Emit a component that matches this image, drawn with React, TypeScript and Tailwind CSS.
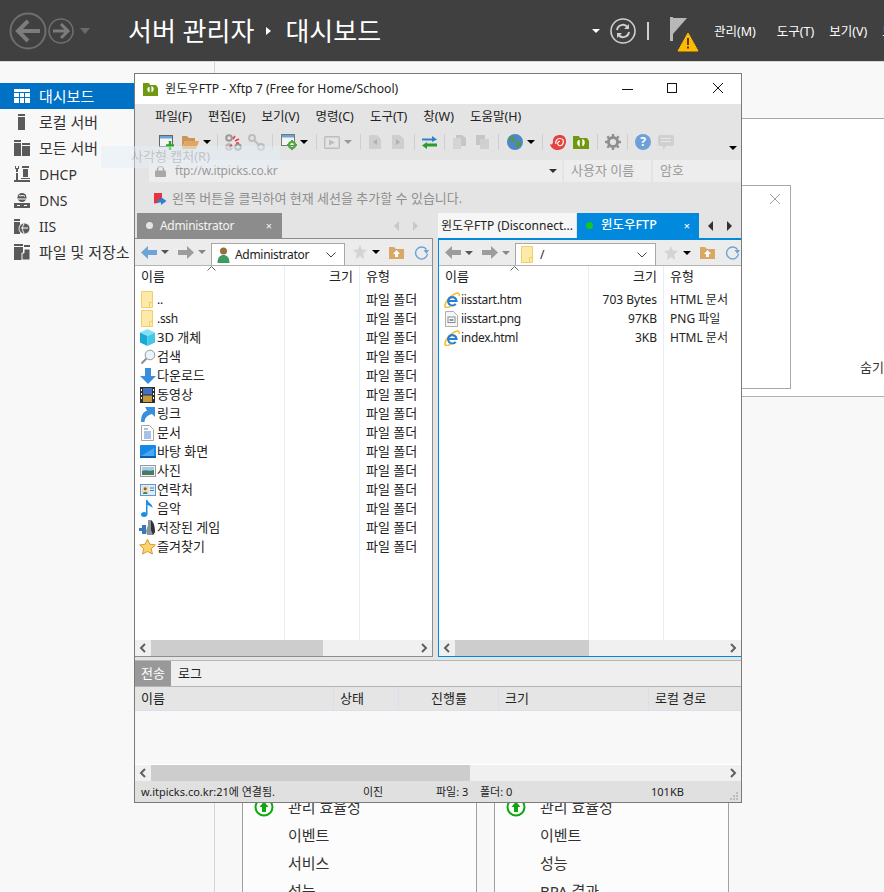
import type { ReactNode } from "react";

const isLatin = (s: string) => /^[\x00-\x7f]+$/.test(s);

function Caret({ className = "border-t-black" }: { className?: string }) {
  return <span className={`inline-block h-0 w-0 shrink-0 border-x-[4px] border-t-[4px] border-x-transparent ${className}`} />;
}

function Sep({ className = "" }: { className?: string }) {
  return <span className={`h-[16px] w-px shrink-0 bg-[#cfcfcf] ${className}`} />;
}

function FolderFile({ className = "" }: { className?: string }) {
  return (
    <svg width="16" height="17" viewBox="0 0 16 17" className={className}>
      <path d="M1.500 .5h11v16h-11z" fill="#fdeaa8" stroke="#f0cf69" />
      <path d="M9.500 16.500v-5h3" fill="none" stroke="#f0cf69" />
    </svg>
  );
}

function NavArrow({ dir, color }: { dir: "left" | "right"; color: string }) {
  return (
    <svg width="16" height="13" viewBox="0 0 16 13" className="shrink-0">
      <path d={dir === "left" ? "M7 0 0 6.500 7 13V9h9V4H7z" : "M9 0l7 6.500L9 13V9H0V4h9z"} fill={color} />
    </svg>
  );
}

function FileIcon({ kind }: { kind: string }) {
  switch (kind) {
    case "folder":
      return <FolderFile />;
    case "3d":
      return (
        <svg width="17" height="17" viewBox="0 0 17 17">
          <path d="M8.500 0 16 3.500 8.500 7 1 3.500z" fill="#7fe3f2" />
          <path d="M1 3.500 8.500 7v10L1 13.500z" fill="#19a9d6" />
          <path d="M16 3.500 8.500 7v10l7.500-3.500z" fill="#43c8e6" />
        </svg>
      );
    case "search":
      return (
        <svg width="16" height="16" viewBox="0 0 16 16">
          <circle cx="10" cy="6" r="4.800" fill="#eaf4fb" stroke="#9a9a9a" />
          <path d="M6.500 9.500 1.500 14.500" stroke="#8d8d8d" strokeWidth="2" />
        </svg>
      );
    case "down":
      return (
        <svg width="16" height="16" viewBox="0 0 16 16">
          <path d="M5 0h6v8h5l-8 8-8-8h5z" fill="#3a8fdc" />
        </svg>
      );
    case "video":
      return (
        <svg width="15" height="16" viewBox="0 0 15 16">
          <rect width="15" height="16" fill="#2d2d2d" />
          <rect x="3" y="1" width="9" height="6.500" fill="#3f70c4" />
          <rect x="3" y="8.500" width="9" height="6.500" fill="#c59a3d" />
          <path d="M1 2h1v2H1zM1 6h1v2H1zM1 10h1v2H1zM13 2h1v2h-1zM13 6h1v2h-1zM13 10h1v2h-1z" fill="#fff" />
        </svg>
      );
    case "link":
      return (
        <svg width="15" height="16" viewBox="0 0 15 16">
          <path d="M1 16C1 9 3 6 7 4.500L5 1h10v10l-3-3C8 9 5 11 4.500 16z" fill="#3a8fdc" />
        </svg>
      );
    case "doc":
      return (
        <svg width="13" height="16" viewBox="0 0 13 16">
          <path d="M.5.500h8l4 4v11H.5z" fill="#fff" stroke="#a8a8a8" />
          <path d="M3 4h4M3 7h7M3 9h7M3 11h7M3 13h7" stroke="#4d86c6" />
        </svg>
      );
    case "desktop":
      return (
        <svg width="16" height="13" viewBox="0 0 16 13">
          <rect width="16" height="13" rx="1" fill="#1489e6" />
          <path d="M1 11 14 3v8z" fill="#47a9f2" />
          <rect y="11" width="16" height="2" fill="#0b5fa8" />
        </svg>
      );
    case "photo":
      return (
        <svg width="16" height="12" viewBox="0 0 16 12">
          <rect x=".5" y=".5" width="15" height="11" fill="#f2f5f8" stroke="#9a9a9a" />
          <rect x="2" y="2" width="12" height="4" fill="#9ed0ee" />
          <path d="M2 6c4-2 7 1 12-1v5H2z" fill="#4a7a63" />
        </svg>
      );
    case "contact":
      return (
        <svg width="16" height="12" viewBox="0 0 16 12">
          <rect x=".5" y=".5" width="15" height="11" fill="#dcecf8" stroke="#5f9bc9" />
          <rect x="2" y="2" width="6.500" height="8" fill="#f3d9b8" />
          <circle cx="5.200" cy="4.800" r="1.500" fill="#8a5a33" />
          <path d="M3 10c0-3 4.500-3 4.500 0z" fill="#3e8a5c" />
          <path d="M10 4h4M10 6.500h4" stroke="#4c7fa8" />
        </svg>
      );
    case "music":
      return (
        <svg width="13" height="17" viewBox="0 0 13 17">
          <path d="M5 0h1.500c.5 3 5.500 4 5 8C10.500 6.500 8.500 5.500 6.500 5v9c0 2-1.500 3-3.500 3S0 16 0 14.500 1.500 12 3 12c1 0 1.500 .2 2 .5z" fill="#1a8fe3" />
        </svg>
      );
    case "game":
      return (
        <svg width="17" height="17" viewBox="0 0 17 17">
          <path d="M0 9h3V6h4v9H3v-3H0z" fill="#3a78b8" />
          <path d="M9 1h3l1 4 3 8-2 3H8l-1-4 2-6z" fill="#8c9299" />
          <path d="M12 1c3 2 4 8 4 12l-2 3-2-5z" fill="#2f3338" />
        </svg>
      );
    case "star":
      return (
        <svg width="18" height="17" viewBox="0 0 18 17">
          <path d="m9 .8 2.500 5.300 5.800 .7-4.300 4 1.200 5.700L9 13.700l-5.200 2.800L5 10.800.7 6.800l5.800-.7z" fill="#fbd46b" stroke="#d9932e" />
        </svg>
      );
    case "ie":
      return (
        <svg width="16" height="16" viewBox="0 0 16 16">
          <path d="M1 15C0 11 6 3 13 1c2-.5 2.500 1.500 2 3" fill="none" stroke="#f0c030" strokeWidth="1.500" />
          <path d="M4.500 9h8a4.200 4.200 0 1 0-.8 2.800" fill="none" stroke="#2c7fd0" strokeWidth="2.200" />
          <path d="M1 15c2 1 4 .5 6-1" fill="none" stroke="#f0c030" strokeWidth="1.500" />
        </svg>
      );
    case "png":
      return (
        <svg width="13" height="16" viewBox="0 0 13 16">
          <path d="M.5.500h8l4 4v11H.5z" fill="#f6f6f6" stroke="#b0b0b0" />
          <rect x="3" y="6" width="7" height="5.500" fill="#fff" stroke="#8a8a8a" />
          <rect x="4.500" y="8" width="4" height="2" fill="#7f9aa8" />
        </svg>
      );
    default:
      return null;
  }
}

type Row = { icon: string; name: string; size?: string; type: string };

const localRows: Row[] = [
  { icon: "folder", name: "..", type: "파일 폴더" },
  { icon: "folder", name: ".ssh", type: "파일 폴더" },
  { icon: "3d", name: "3D 개체", type: "파일 폴더" },
  { icon: "search", name: "검색", type: "파일 폴더" },
  { icon: "down", name: "다운로드", type: "파일 폴더" },
  { icon: "video", name: "동영상", type: "파일 폴더" },
  { icon: "link", name: "링크", type: "파일 폴더" },
  { icon: "doc", name: "문서", type: "파일 폴더" },
  { icon: "desktop", name: "바탕 화면", type: "파일 폴더" },
  { icon: "photo", name: "사진", type: "파일 폴더" },
  { icon: "contact", name: "연락처", type: "파일 폴더" },
  { icon: "music", name: "음악", type: "파일 폴더" },
  { icon: "game", name: "저장된 게임", type: "파일 폴더" },
  { icon: "star", name: "즐겨찾기", type: "파일 폴더" },
];

const remoteRows: Row[] = [
  { icon: "ie", name: "iisstart.htm", size: "703 Bytes", type: "HTML 문서" },
  { icon: "png", name: "iisstart.png", size: "97KB", type: "PNG 파일" },
  { icon: "ie", name: "index.html", size: "3KB", type: "HTML 문서" },
];

function ScrollBar({ thumbWidth }: { thumbWidth: string }) {
  return (
    <div className="flex h-[16px] shrink-0 items-center justify-between bg-[#f0f0f0]">
      <svg width="16" height="16" viewBox="0 0 16 16" className="shrink-0"><path d="M10 4 6 8l4 4" fill="none" stroke="#606060" strokeWidth="2" /></svg>
      <div className="flex h-full min-w-0 flex-1">
        <div className={`h-full bg-[#cdcdcd] ${thumbWidth}`} />
      </div>
      <svg width="16" height="16" viewBox="0 0 16 16" className="shrink-0"><path d="m6 4 4 4-4 4" fill="none" stroke="#606060" strokeWidth="2" /></svg>
    </div>
  );
}

function PaneToolbar({ addrIcon, addr, boxWidth, height, leftColor }: { addrIcon: ReactNode; addr: string; boxWidth: string; height: string; leftColor: string }) {
  return (
    <div className={`flex shrink-0 items-center overflow-hidden border-b border-[#b4b4b4] bg-[#ececec] pl-[6px] ${height}`}>
      <NavArrow dir="left" color={leftColor} />
      <Caret className="ml-[4px] border-t-[#555]" />
      <span className="w-[9px] shrink-0" />
      <NavArrow dir="right" color="#9c9c9c" />
      <Caret className="ml-[4px] border-t-[#888]" />
      <div className={`ml-[5px] flex h-[22px] shrink-0 items-center self-end border border-b-0 border-[#a8a8a8] bg-white pl-[4px] pr-[8px] text-[12px] tracking-[-0.3px] text-[#222] ${boxWidth}`}>
        {addrIcon}
        <span className="ml-[4px] flex-1">{addr}</span>
        <svg width="10" height="6" viewBox="0 0 10 6"><path d="m.5 .5 4.500 4.500L9.500 .5" fill="none" stroke="#444" /></svg>
      </div>
      <svg width="14" height="14" viewBox="0 0 14 14" className="ml-[8px] shrink-0"><path d="m7 0 2 4.600 5 .5-3.800 3.300L11.300 14 7 11.200 2.700 14l1.100-5.600L0 5.100l5-.5z" fill="#d4d4d4" /></svg>
      <Caret className="ml-[5px]" />
      <svg width="15" height="13" viewBox="0 0 15 13" className="ml-[9px] shrink-0">
        <path d="M0 1h5l2 2h8v10H0z" fill="#d9a766" />
        <path d="M7.500 4 11 8H9v3H6V8H4z" fill="#fff" />
      </svg>
      <svg width="15" height="15" viewBox="0 0 15 15" className="ml-[10px] shrink-0">
        <path d="M12.500 4.500A6 6 0 1 0 13.500 9" fill="none" stroke="#6ea3d8" strokeWidth="1.400" />
        <path d="M9.500 5h5.500L12.500 9z" fill="#6ea3d8" />
      </svg>
    </div>
  );
}

function FilePane({
  rows,
  gridCols,
  lines,
  toolbar,
  thumb,
  paneClass,
  sortLeft,
}: {
  rows: Row[];
  gridCols: string;
  lines: ReactNode;
  toolbar: ReactNode;
  thumb: ReactNode;
  paneClass: string;
  sortLeft: string;
}) {
  return (
    <div className={`flex h-full min-w-0 flex-col ${paneClass}`}>
      {toolbar}
      <div className="relative min-h-0 flex-1 bg-white text-[13px] text-[#222]">
        {lines}
        <svg width="9" height="5" viewBox="0 0 9 5" className={`absolute top-0 ${sortLeft}`}>
          <path d="m.5 4.500 4-4 4 4" fill="none" stroke="#666" />
        </svg>
        <div className={`relative grid h-[22px] items-center ${gridCols}`}>
          <span className="pl-[6px]">이름</span>
          <span className="pr-[6px] text-right">크기</span>
          <span className="pl-[7px]">유형</span>
        </div>
        <div className="relative flex flex-col pt-[2px]">
          {rows.map((r) => (
            <div key={r.name} className={`grid h-[19px] items-center ${gridCols}`}>
              <span className="flex items-center">
                <span className="flex w-[21px] shrink-0 justify-center pl-[4px]">
                  <FileIcon kind={r.icon} />
                </span>
                <span className={`truncate pl-[1px] ${isLatin(r.name) ? "text-[12px] tracking-[-0.3px]" : ""}`}>{r.name}</span>
              </span>
              <span className="pr-[6px] text-right text-[12px]">{r.size}</span>
              <span className={`pl-[7px] ${isLatin(r.type.slice(0, 2)) ? "text-[12px]" : ""}`}>{r.type}</span>
            </div>
          ))}
        </div>
      </div>
      {thumb}
    </div>
  );
}

function ToolbarRow() {
  return (
    <div className="flex h-[30px] shrink-0 items-center bg-[#e4e4e4] pb-[6px] pl-[24px] pr-[4px]">
      <svg width="16" height="16" viewBox="0 0 16 16" className="shrink-0">
        <rect x=".5" y="1.500" width="13" height="11" fill="#f4f4f4" stroke="#666" />
        <rect x="1" y="2" width="12" height="2.500" fill="#6ea3d8" />
        <path d="M11 7v9M7 11.500h8" stroke="#28a428" strokeWidth="2.400" />
      </svg>
      <svg width="17" height="14" viewBox="0 0 17 14" className="ml-[7px] shrink-0">
        <path d="M0 1h5l2 2h6v3H3L0 13z" fill="#c9955a" />
        <path d="M3 6h14l-3 8H0z" fill="#dca862" />
      </svg>
      <Caret className="ml-[4px]" />
      <Sep className="ml-[6px]" />
      <svg width="17" height="17" viewBox="0 0 17 17" className="ml-[7px] shrink-0">
        <circle cx="4" cy="4" r="2.800" fill="none" stroke="#9a9a9a" strokeWidth="2" />
        <circle cx="13" cy="13" r="2.800" fill="none" stroke="#9a9a9a" strokeWidth="2" />
        <circle cx="4" cy="13" r="2.800" fill="none" stroke="#b0b0b0" strokeWidth="2" />
        <path d="m8 5 2-3M10 7l4-2M7 11l-3 2M11 9l3 0" stroke="#e5404a" strokeWidth="1.600" />
      </svg>
      <svg width="17" height="17" viewBox="0 0 17 17" className="ml-[6px] shrink-0">
        <circle cx="4" cy="4" r="3" fill="none" stroke="#bdbdbd" strokeWidth="2" />
        <circle cx="13" cy="13" r="3" fill="none" stroke="#bdbdbd" strokeWidth="2" />
        <path d="m6 6 5 5" stroke="#bdbdbd" strokeWidth="2" />
      </svg>
      <Sep className="ml-[7px]" />
      <svg width="16" height="16" viewBox="0 0 16 16" className="ml-[8px] shrink-0">
        <rect x=".5" y=".5" width="13" height="11" fill="#f4f4f4" stroke="#777" />
        <rect x="1" y="1" width="12" height="2.500" fill="#6ea3d8" />
        <circle cx="11" cy="11" r="3" fill="none" stroke="#4ba83d" strokeWidth="2.200" />
        <path d="M11 6v2M11 14v2M6 11h2M14 11h2" stroke="#4ba83d" strokeWidth="2" />
      </svg>
      <Caret className="ml-[3px]" />
      <Sep className="ml-[8px]" />
      <svg width="16" height="13" viewBox="0 0 16 13" className="ml-[7px] shrink-0">
        <rect x=".7" y=".7" width="14.600" height="11.600" rx="1" fill="#e4e4e4" stroke="#bdbdbd" strokeWidth="1.400" />
        <path d="M5 3.500v6L11 6.500z" fill="#bdbdbd" />
      </svg>
      <Caret className="ml-[4px] border-t-[#999]" />
      <Sep className="ml-[8px]" />
      <svg width="12" height="14" viewBox="0 0 12 14" className="ml-[8px] shrink-0">
        <path d="M0 0h8l4 4v10H0z" fill="#cfcfcf" />
        <path d="M8 4 4 7l4 3z" fill="#b0b0b0" />
      </svg>
      <svg width="12" height="14" viewBox="0 0 12 14" className="ml-[11px] shrink-0">
        <path d="M0 0h8l4 4v10H0z" fill="#cfcfcf" />
        <path d="m4 4 4 3-4 3z" fill="#b0b0b0" />
      </svg>
      <Sep className="ml-[10px]" />
      <svg width="17" height="13" viewBox="0 0 17 13" className="ml-[6px] shrink-0">
        <path d="M1 2.500h10V0l5 3.500L11 6V4.500H1z" fill="#2f80d0" />
        <path d="M16 7.500H6V6L1 9.500 6 13v-2.500h10z" fill="#2e9a2e" />
      </svg>
      <Sep className="ml-[6px]" />
      <svg width="13" height="14" viewBox="0 0 13 14" className="ml-[8px] shrink-0">
        <path d="M3 0h6l4 3v8H3z" fill="#c6c6c6" />
        <path d="M0 3h8v11H0z" fill="#d4d4d4" />
      </svg>
      <svg width="13" height="14" viewBox="0 0 13 14" className="ml-[10px] shrink-0">
        <path d="M0 0h9v10H0z" fill="#c6c6c6" />
        <path d="M4 4h9v10H4z" fill="#d0d0d0" />
      </svg>
      <Sep className="ml-[9px]" />
      <svg width="16" height="16" viewBox="0 0 16 16" className="ml-[8px] shrink-0">
        <circle cx="8" cy="8" r="8" fill="#4e86c8" />
        <path d="M3 3c3-2 4 0 5 2S5 9 4 7 1 6 3 3zM9 8c3-1 5 0 5 2s-3 4-4 3-2-4-1-5z" fill="#4f9a47" />
      </svg>
      <Caret className="ml-[4px]" />
      <Sep className="ml-[7px]" />
      <svg width="16" height="15" viewBox="0 0 16 15" className="ml-[7px] shrink-0">
        <path d="M0 9c2 1 3 0 3-3 0-4 3-6 7-6 3 0 6 2 6 6 0 5-3 9-8 9C4 15 1 13 0 9z" fill="#e8403f" />
        <path d="M6 9c-1-3 1-5.500 4-5.500S14 6 13 8.500s-4 3-5 1 .5-3.500 2-3" fill="none" stroke="#fff" strokeWidth="1.200" />
      </svg>
      <svg width="16" height="13" viewBox="0 0 16 13" className="ml-[7px] shrink-0">
        <path d="M0 0h6l1 2h7l2 3v8H0z" fill="#6f9a10" />
        <path d="M6 4.500c-1.500 1-1.500 4 0 5V4zM10 9c1.500-1 1.500-4 0-5v6z" stroke="#fff" strokeWidth="1.400" fill="none" />
      </svg>
      <Sep className="ml-[8px]" />
      <svg width="16" height="16" viewBox="0 0 16 16" className="ml-[7px] shrink-0">
        <circle cx="8" cy="8" r="4.600" fill="none" stroke="#8f8f8f" strokeWidth="3" />
        <path d="M8 0v3M8 13v3M0 8h3M13 8h3M2.300 2.300l2 2M11.700 11.700l2 2M2.300 13.700l2-2M11.700 4.300l2-2" stroke="#8f8f8f" strokeWidth="2.400" />
      </svg>
      <Sep className="ml-[6px]" />
      <span className="ml-[7px] flex h-[16px] w-[16px] shrink-0 items-center justify-center rounded-full bg-[#6d9fd8] text-[12px] font-bold text-white">?</span>
      <svg width="16" height="15" viewBox="0 0 16 15" className="ml-[7px] shrink-0">
        <path d="M2 0h12a2 2 0 0 1 2 2v7a2 2 0 0 1-2 2H8l-3 4v-4H2a2 2 0 0 1-2-2V2a2 2 0 0 1 2-2z" fill="#d0d0d0" />
        <path d="M3 3.500h10M3 6.500h10" stroke="#e8e8e8" />
      </svg>
      <span className="flex-1" />
      <Caret className="mt-[12px]" />
    </div>
  );
}

function Xftp() {
  return (
    <div className="absolute left-[134px] top-[73px] z-10 flex h-[730px] w-[608px] flex-col border border-[#7a7a7a] bg-[#e4e4e4]">
      <div className="flex h-[30px] shrink-0 items-center bg-white pl-[8px] text-[12.2px] text-[#222]">
        <svg width="15" height="13" viewBox="0 0 15 13">
          <path d="M0 0h6l1 2h6l2 3v8H0z" fill="#6f9a10" />
          <path d="M6 4.500c-1.500 1-1.500 3 0 4V4zM9 8c1.500-1 1.500-3 0-4v5z" stroke="#fff" strokeWidth="1.200" fill="none" />
        </svg>
        <span className="ml-[7px]">윈도우FTP - Xftp 7 (Free for Home/School)</span>
        <span className="flex-1" />
        <svg width="101" height="12" viewBox="0 0 101 12" className="mr-[18px]">
          <path d="M0 6.500h11" stroke="#111" />
          <rect x="45.500" y=".5" width="9" height="9" fill="none" stroke="#111" />
          <path d="m91 0 10 10M101 0 91 10" stroke="#111" />
        </svg>
      </div>

      <div className="flex h-[26px] shrink-0 items-center gap-[16px] bg-[#e4e4e4] pl-[20px] text-[12.5px] text-[#222]">
        {["파일(F)", "편집(E)", "보기(V)", "명령(C)", "도구(T)", "창(W)", "도움말(H)"].map((m) => (
          <span key={m}>{m}</span>
        ))}
      </div>

      <ToolbarRow />

      <div className="flex h-[22px] shrink-0 items-center gap-[2px] pl-[14px] text-[13px] text-[#9a9a9a]">
        <div className="flex h-full w-[413px] items-center bg-[#ededed] pl-[6px] pr-[5px]">
          <svg width="11" height="11" viewBox="0 0 11 11"><path d="M2.500 5V3.500a3 3 0 0 1 6 0V5" fill="none" stroke="#a8a8a8" strokeWidth="1.400" /><rect y="4.500" width="11" height="6.500" rx="1" fill="#a8a8a8" /></svg>
          <span className="ml-[9px] flex-1 text-[12px] tracking-[-0.2px]">ftp://w.itpicks.co.kr</span>
          <Caret className="border-t-[#333]" />
        </div>
        <div className="flex h-full w-[87px] items-center bg-[#ededed] pl-[7px]">사용자 이름</div>
        <div className="flex h-full flex-1 items-center bg-[#ededed] pl-[7px]">암호</div>
      </div>

      <div className="flex h-[31px] shrink-0 items-center pl-[19px] pt-[2px] text-[13px] text-[#8f8f8f]">
        <svg width="13" height="12" viewBox="0 0 13 12">
          <path d="M0 0h8v6L4 10l-4 .5z" fill="#e8323c" />
          <path d="M3 6.500h4V4l5.500 4L7 12v-2.500H3z" fill="#2f80d0" />
        </svg>
        <span className="ml-[5px]">왼쪽 버튼을 클릭하여 현재 세션을 추가할 수 있습니다.</span>
      </div>

      <div className="flex h-[25px] shrink-0 text-[12px]">
        <div className="flex w-[303px] items-stretch">
          <div className="ml-[2px] flex w-[145px] items-center bg-[#8c8c8c] pl-[9px] pr-[10px] text-[#f4f4f4]">
            <span className="h-[7px] w-[7px] rounded-full bg-[#e4e4e4]" />
            <span className="ml-[7px] flex-1 tracking-[-0.3px]">Administrator</span>
            <span className="text-[11px] leading-none">×</span>
          </div>
          <span className="flex-1" />
          <div className="flex items-center gap-[14px] pr-[20px]">
            <span className="h-0 w-0 border-y-[5px] border-r-[5px] border-y-transparent border-r-[#c8c8c8]" />
            <span className="h-0 w-0 border-y-[5px] border-l-[5px] border-y-transparent border-l-[#c8c8c8]" />
          </div>
        </div>
        <div className="flex min-w-0 flex-1 items-stretch">
          <div className="flex w-[138px] items-center bg-[#f6f6f6] pl-[3px] text-[#222]">
            <span className="truncate">윈도우FTP (Disconnect...</span>
          </div>
          <div className="ml-px flex w-[122px] items-center bg-[#0089dd] pl-[9px] pr-[9px] text-[12.5px] font-medium text-white">
            <span className="h-[7px] w-[7px] rounded-full bg-[#14c81e]" />
            <span className="ml-[8px] flex-1">윈도우FTP</span>
            <span className="text-[11px] leading-none">×</span>
          </div>
          <div className="flex flex-1 items-center justify-center gap-[14px]">
            <span className="h-0 w-0 border-y-[5px] border-r-[5px] border-y-transparent border-r-[#333]" />
            <span className="h-0 w-0 border-y-[5px] border-l-[5px] border-y-transparent border-l-[#333]" />
          </div>
        </div>
      </div>

      <div className="flex h-[419px] shrink-0 bg-[#e4e4e4]">
        <div className="w-[298px] shrink-0 border-t border-[#8c8c8c]">
          <FilePane
            rows={localRows}
            paneClass="border-b border-r border-[#8c8c8c]"
            gridCols="grid-cols-[150px_74px_1fr]"
            sortLeft="left-[72px]"
            lines={
              <>
                <span className="absolute bottom-0 left-[149px] top-0 w-px bg-[#e8eef6]" />
                <span className="absolute bottom-0 left-[224px] top-0 w-px bg-[#e8eef6]" />
              </>
            }
            toolbar={
              <PaneToolbar
                addr="Administrator"
                boxWidth="w-[134px]"
                height="h-[27px]"
                leftColor="#6ea3d8"
                addrIcon={
                  <svg width="15" height="16" viewBox="0 0 15 16" className="shrink-0">
                    <circle cx="7.500" cy="4" r="3.500" fill="#9a6b3f" />
                    <path d="M1.500 16c0-6 3-8 6-8s6 2 6 8z" fill="#3e9a62" />
                  </svg>
                }
              />
            }
            thumb={<ScrollBar thumbWidth="w-[172px]" />}
          />
        </div>
        <span className="w-[5px] shrink-0" />
        <div className="min-w-0 flex-1 border-t-[2px] border-[#0089dd]">
          <FilePane
            rows={remoteRows}
            paneClass="border-b border-l border-[#0089dd]"
            gridCols="grid-cols-[149px_75px_1fr]"
            sortLeft="left-[71px]"
            lines={
              <>
                <span className="absolute bottom-0 left-[149px] top-0 w-px bg-[#e8eef6]" />
                <span className="absolute bottom-0 left-[224px] top-0 w-px bg-[#e8eef6]" />
              </>
            }
            toolbar={
              <PaneToolbar
                addr="/"
                boxWidth="w-[141px]"
                height="h-[26px]"
                leftColor="#9c9c9c"
                addrIcon={<FolderFile className="shrink-0" />}
              />
            }
            thumb={<ScrollBar thumbWidth="w-[134px]" />}
          />
        </div>
      </div>

      <div className="mt-[3px] flex min-h-0 flex-1 flex-col border-t border-[#b8b8b8] text-[13px] text-[#222]">
        <div className="flex h-[26px] shrink-0 border-b border-[#b4b4b4] bg-[#efefef]">
          <span className="flex w-[36px] items-center justify-center bg-[#999] text-white">전송</span>
          <span className="flex items-center pl-[7px]">로그</span>
        </div>
        <div className="grid h-[24px] shrink-0 grid-cols-[199px_65px_100px_150px_1fr] items-center border-b border-[#d8e0ec] bg-[#e5e5e5]">
          <span className="border-r border-[#d8e0ec] pl-[6px] leading-[23px]">이름</span>
          <span className="border-r border-[#d8e0ec] pl-[6px] leading-[23px]">상태</span>
          <span className="border-r border-[#d8e0ec] pr-[31px] text-right leading-[23px]">진행률</span>
          <span className="border-r border-[#d8e0ec] pl-[6px] leading-[23px]">크기</span>
          <span className="pl-[6px] leading-[23px]">로컬 경로</span>
        </div>
        <div className="min-h-0 flex-1 bg-[#f8f8f8]" />
        <div className="border-t border-white">
          <ScrollBar thumbWidth="w-[319px]" />
        </div>
        <div className="flex h-[21px] shrink-0 items-center bg-[#e0e0e0] pl-[6px] pt-[2px] text-[11px]">
          <span className="w-[222px]">w.itpicks.co.kr:21에 연결됨.</span>
          <span className="w-[73px]">이진</span>
          <span className="w-[42px]">파일: 3</span>
          <span className="ml-[2px] w-[171px]">폴더: 0</span>
          <span>101KB</span>
          <span className="flex-1" />
          <svg width="10" height="10" viewBox="0 0 10 10" className="mr-[2px] mt-[8px]">
            <path d="M7 0h2v2H7zM4 3h2v2H4zM7 3h2v2H7zM1 6h2v2H1zM4 6h2v2H4zM7 6h2v2H7z" fill="#bdbdbd" />
          </svg>
        </div>
      </div>
    </div>
  );
}

function SideIcon({ kind }: { kind: string }) {
  const c = kind === "dash" ? "#fff" : "#5a5a5a";
  if (kind === "dash") {
    return (
      <svg width="16" height="14" viewBox="0 0 16 14">
        <path d="M0 0h16v3H0zM0 4h5v4H0zM6 4h4v4H6zM11 4h5v4h-5zM0 9h5v5H0zM6 9h4v5H6zM11 9h5v5h-5z" fill={c} />
      </svg>
    );
  }
  if (kind === "local") {
    return (
      <svg width="16" height="16" viewBox="0 0 16 16">
        <path d="M4 0h7v2H4zM4 3h7v13H4z" fill={c} />
      </svg>
    );
  }
  if (kind === "all") {
    return (
      <svg width="16" height="16" viewBox="0 0 16 16">
        <path d="M0 0h7v2H0zM0 3h7v13H0zM8 3h8v2H8zM8 6h8v10H8z" fill={c} />
      </svg>
    );
  }
  if (kind === "dhcp") {
    return (
      <svg width="16" height="16" viewBox="0 0 16 16">
        <path d="M1 0v3h1v3h2V3h1V0H4v2H2V0zM2 7h2v7H2zM8 0h7v2H8zM9 3h5v8H9zM7 12h9v1H7zM0 14h16v2H0z" fill={c} />
      </svg>
    );
  }
  if (kind === "dns") {
    return (
      <svg width="16" height="15" viewBox="0 0 16 15">
        <circle cx="8" cy="4.500" r="4.500" fill={c} />
        <path d="M5 2.500c2 1 4-1 6 1M4 6h8" stroke="#fff" fill="none" />
        <path d="M0 10h16v5H0z" fill={c} />
        <path d="M3 12.500h3M10 12.500h3" stroke="#fff" />
      </svg>
    );
  }
  if (kind === "iis") {
    return (
      <svg width="16" height="15" viewBox="0 0 16 15">
        <path d="M0 0h6v2H0zM0 3h6v12H0z" fill={c} />
        <circle cx="10.500" cy="9.500" r="5.500" fill={c} stroke="#f8f8f8" />
        <path d="M7 9h7M10 5c-2 3-2 6 0 9" stroke="#fff" fill="none" />
      </svg>
    );
  }
  return (
    <svg width="16" height="16" viewBox="0 0 16 16">
      <path d="M0 0h9v2H0zM0 3h9v13H0zM10 1h6v2h-6z" fill={c} />
      <path d="M10 5h6v11H8V9h2z" fill={c} stroke="#f8f8f8" />
    </svg>
  );
}

const sideItems = [
  { kind: "dash", label: "대시보드" },
  { kind: "local", label: "로컬 서버" },
  { kind: "all", label: "모든 서버" },
  { kind: "dhcp", label: "DHCP" },
  { kind: "dns", label: "DNS" },
  { kind: "iis", label: "IIS" },
  { kind: "file", label: "파일 및 저장소 서비스" },
];

function Tile({ items }: { items: string[] }) {
  return (
    <div className="h-full w-[235px] overflow-hidden border-x border-[#a0a0a0] bg-[#fcfcfc] text-[15px] text-[#333]">
      <div className="flex flex-col pl-[11px]">
        <div className="flex h-[28px] items-center">
          <svg width="20" height="20" viewBox="0 0 20 20">
            <circle cx="10" cy="10" r="8.500" fill="none" stroke="#0ca80c" strokeWidth="2" />
            <path d="M10 4.500 14.500 10H12v5H8v-5H5.500z" fill="#0ca80c" />
          </svg>
          <span className="ml-[14px]">관리 효율성</span>
        </div>
        {items.map((t) => (
          <div key={t} className="flex h-[28px] items-center pl-[34px]">{t}</div>
        ))}
      </div>
    </div>
  );
}

export default function App() {
  return (
    <div className="relative h-[892px] w-[884px] overflow-hidden bg-[#f8f8f8] font-['Noto_Sans','Noto_Sans_CJK_KR',sans-serif]">
      <header className="flex h-[62px] items-center border-b border-[#d8d8d8] bg-[#404040] text-white">
        <div className="flex items-center pl-[9px]">
          <svg width="38" height="38" viewBox="0 0 38 38">
            <circle cx="19" cy="19" r="17.500" fill="none" stroke="#6e6e6e" strokeWidth="2" />
            <path d="M19 9 9 19l10 10M9 19h22" fill="none" stroke="#7c7c7c" strokeWidth="4" />
          </svg>
          <svg width="26" height="26" viewBox="0 0 26 26" className="ml-[1px]">
            <circle cx="13" cy="13" r="12" fill="none" stroke="#6e6e6e" strokeWidth="1.600" />
            <path d="m13 6 7 7-7 7M20 13H5" fill="none" stroke="#7c7c7c" strokeWidth="3" />
          </svg>
          <Caret className="ml-[6px] border-x-[5px] border-t-[6px] border-t-[#6a6a6a]" />
        </div>
        <span className="ml-[38px] pt-[1px] text-[26px] leading-none">서버 관리자</span>
        <span className="ml-[12px] h-0 w-0 border-y-[4px] border-l-[5px] border-y-transparent border-l-white" />
        <span className="ml-[14px] pt-[1px] text-[26px] leading-none">대시보드</span>
        <span className="flex-1" />
        <Caret className="mr-[10px] border-x-[4px] border-t-[4px] border-t-white" />
        <svg width="26" height="26" viewBox="0 0 26 26">
          <circle cx="13" cy="13" r="12" fill="none" stroke="#cfcfcf" strokeWidth="1.600" />
          <path d="M7 12a6 6 0 0 1 10.500-3M19 14a6 6 0 0 1-10.500 3" fill="none" stroke="#cfcfcf" strokeWidth="2" />
          <path d="M19 6v5h-5zM7 20v-5h5z" fill="#cfcfcf" />
        </svg>
        <span className="ml-[11px] h-[18px] w-[2px] bg-[#cfcfcf]" />
        <div className="ml-[21px] mt-[8px] h-[36px] w-[30px]">
          <svg width="30" height="36" viewBox="0 0 30 36">
            <path d="M0 0h3v24H0z" fill="#b8b8b8" />
            <path d="M3 1h14L3 17z" fill="#b8b8b8" />
            <path d="M18 16 28 34H8z" fill="#ffb900" stroke="#ffb900" strokeLinejoin="round" />
            <path d="M18 21v7M18 29.500v2" stroke="#222" strokeWidth="1.600" />
          </svg>
        </div>
        <nav className="ml-[14px] flex w-[170px] shrink-0 overflow-hidden pt-[3px] text-[12.5px]">
          <span className="shrink-0">관리(M)</span>
          <span className="ml-[21px] shrink-0">도구(T)</span>
          <span className="ml-[15px] shrink-0">보기(V)</span>
          <span className="ml-[15px] shrink-0">도움말(H)</span>
        </nav>
      </header>

      <div className="flex h-[830px]">
        <aside className="h-full w-[215px] shrink-0 border-r border-[#d4d4d4] pt-[21px] text-[15px] text-[#333]">
          {sideItems.map((s) => (
            <div key={s.label} className={`flex h-[26px] items-center overflow-hidden whitespace-nowrap pl-[14px] ${s.kind === "dash" ? "bg-[#0072c6] text-white" : ""}`}>
              <span className="flex w-[24px] shrink-0">
                <SideIcon kind={s.kind} />
              </span>
              <span className={`ml-px ${isLatin(s.label) ? "text-[14px]" : ""}`}>{s.label}</span>
            </div>
          ))}
        </aside>
        <main className="flex min-w-0 flex-1 flex-col">
          <div className="h-[57px] shrink-0 border-b border-[#a8a8a8] bg-[#f8f8f8]" />
          <div className="h-[278px] shrink-0 border-b border-[#b0b0b0] bg-white pl-[27px] pt-[66px]">
            <div className="flex h-[204px] w-[549px] justify-end border border-l-0 border-[#a8a8a8]">
              <svg width="12" height="12" viewBox="0 0 12 12" className="mr-[9px] mt-[7px]">
                <path d="m1 1 10 10M11 1 1 11" stroke="#a0a0a0" />
              </svg>
            </div>
          </div>
        </main>
      </div>

      <span className="absolute left-[860px] top-[358px] text-[13px] text-[#333]">숨기</span>

      <div className="absolute left-[242px] top-[793px] flex h-[99px] gap-[17px]">
        <Tile items={["이벤트", "서비스", "성능"]} />
        <Tile items={["이벤트", "성능", "BPA 결과"]} />
      </div>

      <Xftp />

      <div className="pointer-events-none absolute left-[101px] top-[146px] z-20 flex h-[22px] w-[179px] items-center bg-[#e4eef8]/50 pl-[30px] text-[13px] text-[#888]/40">
        사각형 캡처(R)
      </div>
    </div>
  );
}
